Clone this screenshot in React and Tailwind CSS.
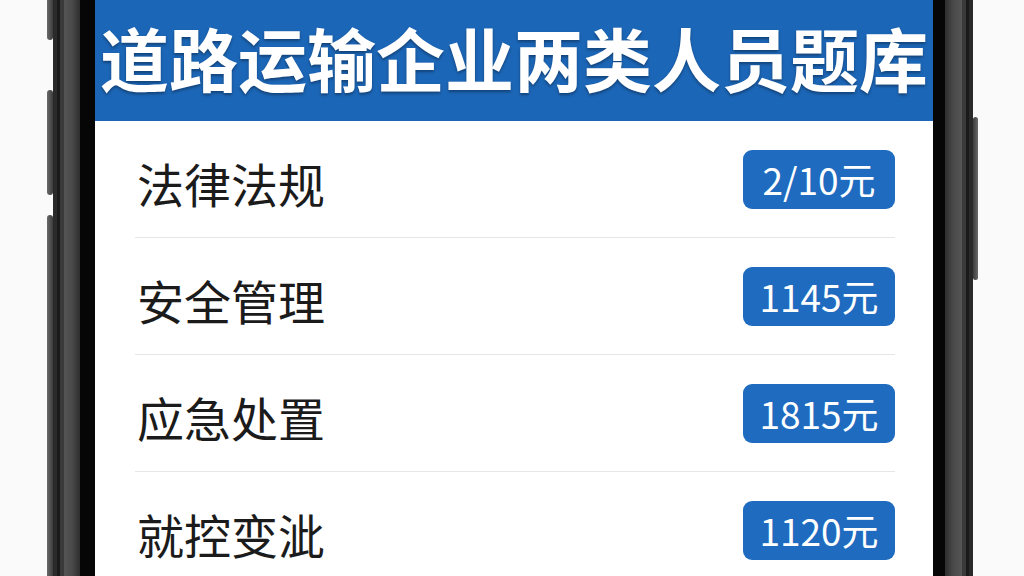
import React from 'react';

const rows = [
  { name: '法律法规', price: '2/10元' },
  { name: '安全管理', price: '1145元' },
  { name: '应急处置', price: '1815元' },
  { name: '就控变泚', price: '1120元' },
];

const cjk = { fontFamily: '"Noto Sans CJK SC", "Noto Sans", sans-serif' };

export default function App() {
  return (
    <div className="w-[1024px] h-[576px] bg-[#fafafa] flex overflow-hidden" style={cjk}>
      {/* left outside */}
      <div className="w-[47px] shrink-0" />

      {/* left side buttons */}
      <div className="w-[6px] shrink-0 flex flex-col">
        <div className="h-[40px] rounded-b-[3px] bg-gradient-to-r from-[#6a6a6a] to-[#3c3c3c]" />
        <div className="h-[50px]" />
        <div className="h-[105px] rounded-[3px] bg-gradient-to-r from-[#6a6a6a] to-[#3c3c3c]" />
        <div className="h-[20px]" />
        <div className="flex-1 rounded-t-[3px] bg-gradient-to-r from-[#6a6a6a] to-[#3c3c3c]" />
      </div>

      {/* left frame */}
      <div className="w-[27px] shrink-0 flex">
        <div className="w-[4px] bg-[#2a2a2a]" />
        <div className="w-[3px] bg-[#1a1a1a]" />
        <div className="w-[4px] bg-[#3a3a3a]" />
        <div className="flex-1 bg-gradient-to-r from-[#555] via-[#4a4a4a] to-[#2e2e2e]" />
      </div>
      <div className="w-[15px] shrink-0 bg-[#060606]" />

      {/* screen */}
      <div className="w-[838px] shrink-0 flex flex-col bg-white">
        <div className="h-[121px] shrink-0 bg-[#1c66b7] flex items-center justify-center pb-[6px]">
          <h1
            className="text-white font-bold text-[69px] leading-none whitespace-nowrap"
            style={{ textShadow: '0 2px 3px rgba(0,0,0,0.35)' }}
          >
            道路运输企业两类人员题库
          </h1>
        </div>

        <div className="flex flex-col pl-[40px] pr-[38px]">
          {rows.map((row, i) => (
            <div
              key={i}
              className={`h-[117px] shrink-0 flex items-center justify-between ${i < rows.length - 1 ? 'border-b border-[#e6e6e6]' : ''}`}
            >
              <span className="text-[47px] leading-none text-[#1b1b1b] pl-[2px] pt-[6px]">{row.name}</span>
              <span className="w-[152px] h-[59px] rounded-[9px] bg-[#1e6bbf] text-white text-[37px] leading-none flex items-center justify-center">
                {row.price}
              </span>
            </div>
          ))}
        </div>
      </div>

      {/* right frame */}
      <div className="w-[12px] shrink-0 bg-[#060606]" />
      <div className="w-[28px] shrink-0 flex">
        <div className="flex-1 bg-gradient-to-r from-[#2e2e2e] via-[#4a4a4a] to-[#555]" />
        <div className="w-[4px] bg-[#3a3a3a]" />
        <div className="w-[3px] bg-[#1a1a1a]" />
        <div className="w-[4px] bg-[#2a2a2a]" />
      </div>

      {/* right side button */}
      <div className="w-[5px] shrink-0 flex flex-col">
        <div className="h-[117px]" />
        <div className="h-[163px] rounded-[3px] bg-gradient-to-r from-[#3c3c3c] to-[#6a6a6a]" />
      </div>

      <div className="flex-1" />
    </div>
  );
}
